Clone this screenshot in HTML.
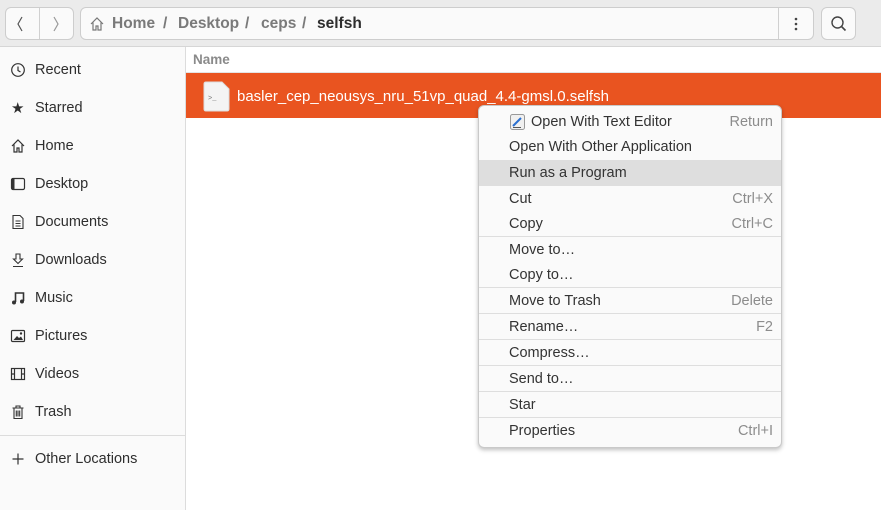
<!DOCTYPE html>
<html><head><style>
*{margin:0;padding:0;box-sizing:border-box}
body{width:881px;height:510px;overflow:hidden;background:#fff;font-family:"Liberation Sans",sans-serif;font-size:14px;color:#2e2e2e;position:relative}
.a{position:absolute}
.hdr{left:0;top:0;width:881px;height:47px;background:#ebebeb;border-bottom:1px solid #d6d6d6}
.btn{border:1px solid #cdcdcd;background:#fafafa;border-radius:6px}
.side{left:0;top:47px;width:186px;height:463px;background:#fafafa;border-right:1px solid #dcdcdc}
.si{position:absolute;left:35px;font-size:14.5px;color:#2e2e2e}
.ic{position:absolute;left:10px}
.menu{left:478px;top:105px;width:304px;height:343px;background:#fafafa;border:1px solid #c9c9c9;border-radius:6px;box-shadow:0 2px 4px rgba(0,0,0,.25)}
.mi{position:absolute;left:30px;font-size:14.5px;color:#333}
.sc{position:absolute;right:8px;color:#8c8c8c;font-size:14.5px}
.sep{position:absolute;left:0;width:302px;height:1px;background:#dedede}
.pt{position:absolute;top:15px;font-size:15.5px;font-weight:bold;color:#7a7a7a}
</style></head><body>
<div class="a hdr"></div>
<div class="a btn" style="left:5px;top:7px;width:69px;height:33px"></div>
<div class="a" style="left:39px;top:8px;width:1px;height:31px;background:#d0d0d0"></div>
<svg class="a" style="left:15px;top:14px" width="12" height="20"><path d="M7 3 L3 10 L7 17" stroke="#555" fill="none" stroke-width="1.2"/></svg>
<svg class="a" style="left:50px;top:14px" width="12" height="20"><path d="M4 3 L8 10 L4 17" stroke="#999" fill="none" stroke-width="1.2"/></svg>
<div class="a btn" style="left:80px;top:7px;width:734px;height:33px"></div>
<div class="a" style="left:778px;top:8px;width:1px;height:31px;background:#d0d0d0"></div>
<svg class="a" style="left:89px;top:16px" width="16" height="16"><path d="M2 8 L8 2 L14 8 M4 6.5 V14 H7 V10 H9 V14 H12 V6.5" stroke="#777" fill="none" stroke-width="1.2"/></svg>
<div class="pt" style="left:112px">Home</div>
<div class="pt" style="left:163px">/</div>
<div class="pt" style="left:178px">Desktop</div>
<div class="pt" style="left:245px">/</div>
<div class="pt" style="left:261px">ceps</div>
<div class="pt" style="left:302px">/</div>
<div class="pt" style="left:317px;color:#2e2e2e">selfsh</div>
<svg class="a" style="left:792px;top:16px" width="8" height="16"><circle cx="4" cy="3" r="1.3" fill="#444"/><circle cx="4" cy="8" r="1.3" fill="#444"/><circle cx="4" cy="13" r="1.3" fill="#444"/></svg>
<div class="a btn" style="left:821px;top:7px;width:35px;height:33px"></div>
<svg class="a" style="left:830px;top:15px" width="18" height="18"><circle cx="7.5" cy="7.5" r="5.5" stroke="#444" stroke-width="1.4" fill="none"/><path d="M11.5 11.5 L15.5 15.5" stroke="#444" stroke-width="1.6"/></svg>

<div class="a side"></div>
<svg class="ic" style="top:62px" width="16" height="16"><circle cx="8" cy="8" r="6.3" stroke="#333" fill="none" stroke-width="1.2"/><path d="M8 4.5V8.5L10.5 10" stroke="#333" fill="none" stroke-width="1.2"/></svg>
<div class="si" style="top:62px">Recent</div>
<div class="ic" style="top:99px;font-size:15px;left:11px">★</div>
<div class="si" style="top:100px">Starred</div>
<svg class="ic" style="top:138px" width="16" height="16"><path d="M2 8 L8 2 L14 8 M4 6.5 V14 H7 V10 H9 V14 H12 V6.5" stroke="#333" fill="none" stroke-width="1.2"/></svg>
<div class="si" style="top:138px">Home</div>
<svg class="ic" style="top:176px" width="16" height="16"><rect x="1.5" y="2.5" width="13" height="11" rx="1.5" stroke="#333" fill="none" stroke-width="1.2"/><rect x="1.5" y="2.5" width="3" height="11" fill="#333"/></svg>
<div class="si" style="top:176px">Desktop</div>
<svg class="ic" style="top:214px" width="16" height="16"><path d="M3 1.5H10L13 4.5V14.5H3Z M5.5 7H10.5 M5.5 9.5H10.5 M5.5 12H10.5" stroke="#333" fill="none" stroke-width="1.1"/></svg>
<div class="si" style="top:214px">Documents</div>
<svg class="ic" style="top:252px" width="16" height="16"><path d="M6 2H10V7H12.5L8 11.5L3.5 7H6Z M3 14.5H13" stroke="#333" fill="none" stroke-width="1.1"/></svg>
<div class="si" style="top:252px">Downloads</div>
<svg class="ic" style="top:290px" width="16" height="16"><path d="M5.5 12V3H13.5V11" stroke="#333" fill="none" stroke-width="1.6"/><circle cx="4" cy="12.5" r="2" fill="#333"/><circle cx="12" cy="11.5" r="2" fill="#333"/></svg>
<div class="si" style="top:290px">Music</div>
<svg class="ic" style="top:328px" width="16" height="16"><rect x="1.5" y="2.5" width="13" height="11" rx="1" stroke="#333" fill="none" stroke-width="1.2"/><path d="M3.5 12L7 8L9 10L11 8.5L13 12Z" fill="#333"/><circle cx="11" cy="5.5" r="1.2" fill="#333"/></svg>
<div class="si" style="top:328px">Pictures</div>
<svg class="ic" style="top:366px" width="16" height="16"><rect x="1.5" y="2.5" width="13" height="11" stroke="#333" fill="none" stroke-width="1.2"/><path d="M4.5 2.5V13.5M11.5 2.5V13.5M1.5 8H4.5M11.5 8H14.5" stroke="#333" stroke-width="1.2"/></svg>
<div class="si" style="top:366px">Videos</div>
<svg class="ic" style="top:404px" width="16" height="16"><path d="M2.5 4H13.5 M6 4V2H10V4 M4 4V14.5H12V4 M6.3 6.5V12.5 M8 6.5V12.5 M9.7 6.5V12.5" stroke="#333" fill="none" stroke-width="1.1"/></svg>
<div class="si" style="top:404px">Trash</div>
<div class="a" style="left:0;top:435px;width:185px;height:1px;background:#dcdcdc"></div>
<svg class="ic" style="top:451px" width="16" height="16"><path d="M8 2.5V13.5M2.5 8H13.5" stroke="#333" stroke-width="1.2"/></svg>
<div class="si" style="top:451px">Other Locations</div>

<div class="a" style="left:193px;top:52px;font-weight:bold;color:#8a8a8a;font-size:13.5px">Name</div>
<div class="a" style="left:186px;top:72px;width:695px;height:1px;background:#e4e4e4"></div>
<div class="a" style="left:186px;top:73px;width:695px;height:45px;background:#e95420"></div>
<svg class="a" style="left:203px;top:81px" width="27" height="31"><path d="M1 3Q1 1 3 1H19L26 8V28Q26 30 24 30H3Q1 30 1 28Z" fill="#f4f4f4" stroke="#ddd"/><text x="5" y="19" font-size="7" fill="#777" font-family="Liberation Mono">&gt;_</text></svg>
<div class="a" style="left:237px;top:88px;color:#fff;font-size:15px">basler_cep_neousys_nru_51vp_quad_4.4-gmsl.0.selfsh</div>

<div class="a menu">
<div class="a" style="left:0;top:54px;width:302px;height:26px;background:#dedede"></div>
<svg class="a" style="left:31px;top:8px" width="15" height="16"><rect x="0.5" y="0.5" width="14" height="15" rx="2" fill="#f0f0f0" stroke="#999"/><path d="M3 12L11 4" stroke="#2a6fd0" stroke-width="2"/><path d="M3 13.5H11" stroke="#555"/></svg>
<div class="mi" style="left:52px;top:8px">Open With Text Editor</div><div class="sc" style="top:8px">Return</div>
<div class="mi" style="top:33px">Open With Other Application</div>
<div class="mi" style="top:59px">Run as a Program</div>
<div class="mi" style="top:85px">Cut</div><div class="sc" style="top:85px">Ctrl+X</div>
<div class="mi" style="top:110px">Copy</div><div class="sc" style="top:110px">Ctrl+C</div>
<div class="sep" style="top:130px"></div>
<div class="mi" style="top:136px">Move to…</div>
<div class="mi" style="top:161px">Copy to…</div>
<div class="sep" style="top:181px"></div>
<div class="mi" style="top:187px">Move to Trash</div><div class="sc" style="top:187px">Delete</div>
<div class="sep" style="top:207px"></div>
<div class="mi" style="top:213px">Rename…</div><div class="sc" style="top:213px">F2</div>
<div class="sep" style="top:233px"></div>
<div class="mi" style="top:239px">Compress…</div>
<div class="sep" style="top:259px"></div>
<div class="mi" style="top:265px">Send to…</div>
<div class="sep" style="top:285px"></div>
<div class="mi" style="top:291px">Star</div>
<div class="sep" style="top:311px"></div>
<div class="mi" style="top:317px">Properties</div><div class="sc" style="top:317px">Ctrl+I</div>
</div>
</body></html>
